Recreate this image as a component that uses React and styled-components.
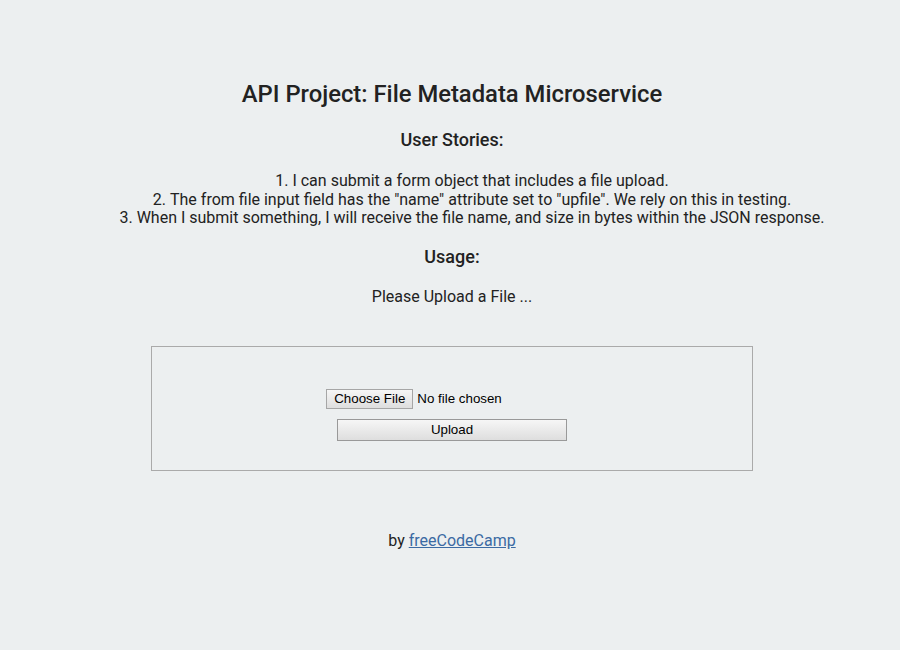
import React from 'react';
import styled, { createGlobalStyle } from 'styled-components';

const GlobalStyle = createGlobalStyle`
  html, body {
    margin: 0;
    padding: 0;
    background-color: #eceff0;
  }
  body {
    font-family: Roboto, "Liberation Sans", sans-serif;
    font-size: 16px;
    color: #222;
  }
`;

const Page = styled.div`
  min-height: 650px;
  box-sizing: border-box;
  padding: 79px 20px 0 24px;
  text-align: center;
`;

const Title = styled.h1`
  margin: 0 0 20px;
  font-size: 23.8px;
  font-weight: 500;
  line-height: 30px;
`;

const SubTitle = styled.h3`
  margin: 0 0 ${(p) => p.gap}px;
  font-size: 18px;
  font-weight: 500;
  line-height: 22px;
`;

const Stories = styled.ol`
  list-style-position: inside;
  margin: 0 0 18px;
  padding: 0 0 0 40px;
  line-height: 18.5px;
`;

const Para = styled.p`
  margin: 0 0 39px;
  line-height: 20px;
`;

const UploadBox = styled.form`
  width: 602px;
  height: 125px;
  box-sizing: border-box;
  margin: 0 auto;
  padding-top: 42px;
  border: 1px solid #aaa;
  display: flex;
  flex-direction: column;
  align-items: center;
  gap: 10px;
`;

const FileRow = styled.label`
  display: flex;
  align-items: center;
  gap: 4px;
  font-family: "Liberation Sans", Arial, sans-serif;
  font-size: 13.33px;
  color: #000;
  margin-left: -76px;
`;

const NativeButton = styled.span`
  display: inline-block;
  box-sizing: border-box;
  height: ${(p) => p.h}px;
  width: ${(p) => (p.w ? `${p.w}px` : 'auto')};
  padding: 0 7px;
  line-height: ${(p) => p.h - 2}px;
  border: 1px solid ${(p) => (p.w ? '#999' : '#a6a6a6')};
  background: linear-gradient(#f6f6f6, #dedede);
  font-family: "Liberation Sans", Arial, sans-serif;
  font-size: 13.33px;
  color: #000;
  text-align: center;
`;

const Footer = styled.p`
  margin: 60px 0 0;
  line-height: 20px;
`;

const Link = styled.a`
  color: #3b6aa3;
  text-decoration: underline;
`;

export default function App() {
  return (
    <>
      <GlobalStyle />
      <Page>
        <Title>API Project: File Metadata Microservice</Title>
        <SubTitle gap={21}>User Stories:</SubTitle>
        <Stories>
          <li>I can submit a form object that includes a file upload.</li>
          <li>The from file input field has the "name" attribute set to "upfile". We rely on this in testing.</li>
          <li>When I submit something, I will receive the file name, and size in bytes within the JSON response.</li>
        </Stories>
        <SubTitle gap={19}>Usage:</SubTitle>
        <Para>Please Upload a File ...</Para>
        <UploadBox onSubmit={(e) => e.preventDefault()}>
          <FileRow>
            <NativeButton h={20}>Choose File</NativeButton>
            <span>No file chosen</span>
          </FileRow>
          <NativeButton h={22} w={230}>Upload</NativeButton>
        </UploadBox>
        <Footer>
          by <Link href="#">freeCodeCamp</Link>
        </Footer>
      </Page>
    </>
  );
}
